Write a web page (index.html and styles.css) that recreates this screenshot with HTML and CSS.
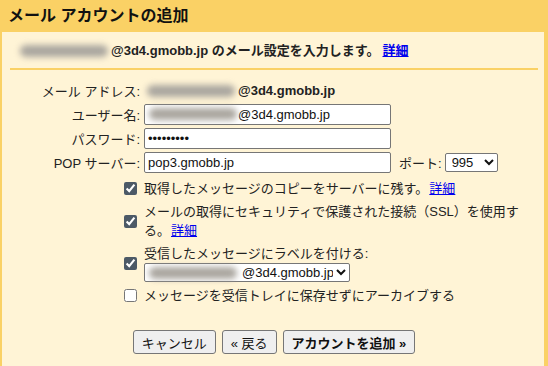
FILE: index.html
```html
<!DOCTYPE html>
<html lang="ja">
<head>
    <meta charset="UTF-8">
    <meta name="viewport" content="width=device-width, initial-scale=1.0">
    <title>メール アカウントの追加</title>
    <link rel="stylesheet" href="styles.css">
</head>
<body>
    <div class="title">メール アカウントの追加</div>
    <div class="panel">
        <div class="intro">
            <span class="blur"></span><b>@3d4.gmobb.jp のメール設定を入力します。</b><a href="#">詳細</a>
        </div>

        <form class="settings">
            <label>メール アドレス:</label>
            <div class="value"><span class="blur"></span><b>@3d4.gmobb.jp</b></div>

            <label for="user">ユーザー名:</label>
            <div class="field">
                <input type="text" id="user" class="masked" value="@3d4.gmobb.jp">
                <span class="blur over"></span>
            </div>

            <label for="pass">パスワード:</label>
            <div><input type="password" id="pass" value="123456789"></div>

            <label for="server">POP サーバー:</label>
            <div class="server">
                <input type="text" id="server" value="pop3.gmobb.jp">
                <span class="port">ポート:</span>
                <select class="port-select">
                    <option>995</option>
                    <option>110</option>
                </select>
            </div>
        </form>

        <div class="options">
            <div class="option">
                <input type="checkbox" checked>
                <span>取得したメッセージのコピーをサーバーに残す。<a href="#">詳細</a></span>
            </div>
            <div class="option">
                <input type="checkbox" checked>
                <span class="wrap">メールの取得にセキュリティで保護された接続（SSL）を使用する。<a href="#">詳細</a></span>
            </div>
            <div class="option">
                <input type="checkbox" checked>
                <div>
                    <div>受信したメッセージにラベルを付ける:</div>
                    <div class="field">
                        <select class="label-select">
                            <option>@3d4.gmobb.jp</option>
                        </select>
                        <span class="blur over"></span>
                    </div>
                </div>
            </div>
            <div class="option">
                <input type="checkbox">
                <span>メッセージを受信トレイに保存せずにアーカイブする</span>
            </div>
        </div>

        <div class="buttons">
            <button>キャンセル</button>
            <button>« 戻る</button>
            <button class="primary">アカウントを追加 »</button>
        </div>
    </div>
</body>
</html>
```

FILE: styles.css
```css
body {
    margin: 0;
    background: #fad165;
    color: #222;
    font-family: "Liberation Sans", "Noto Sans CJK JP", sans-serif;
    font-size: 13px;
}
.title {
    height: 32px;
    line-height: 31px;
    padding-left: 8px;
    font-size: 16px;
    font-weight: bold;
    color: #111;
}
.panel {
    background: #fff4d6;
    margin: 0 4px 0 2px;
    padding: 0 6px 0 8px;
    min-height: calc(100vh - 32px);
    box-sizing: border-box;
}
a {
    color: #0000ee;
}
.intro {
    padding: 10px 0 8px 8px;
    line-height: 18px;
    border-bottom: 2px solid #fad165;
}
.intro a {
    margin-left: 3px;
    font-weight: bold;
}
.options a {
    margin-left: 1px;
}
.blur {
    display: inline-block;
    width: 88px;
    height: 12px;
    margin: 0 3px 0 2px;
    background: #aaa69f;
    border-radius: 6px;
    filter: blur(3px);
    vertical-align: -2px;
}
.settings {
    display: grid;
    grid-template-columns: 130px 1fr;
    grid-auto-rows: 21px;
    column-gap: 4px;
    row-gap: 3px;
    align-items: center;
    margin-top: 10px;
}
.settings label {
    text-align: right;
}
.value .blur {
    margin-left: 3px;
}
input[type="text"], input[type="password"] {
    width: 247px;
    height: 21px;
    box-sizing: border-box;
    border: 1px solid #767676;
    border-radius: 2px;
    padding: 1px 3px;
    font-family: inherit;
    font-size: 13px;
    color: #111;
    background: white;
}
input.masked {
    padding-left: 93px;
}
.field {
    position: relative;
    display: inline-block;
}
.blur.over {
    position: absolute;
    left: 5px;
    top: 4px;
    margin: 0;
}
.server {
    display: flex;
    align-items: center;
}
.port {
    margin: 0 3px 0 8px;
}
select {
    font-family: inherit;
    font-size: 13px;
    color: #111;
    border: 1px solid #767676;
    border-radius: 2px;
    background: white;
}
.port-select {
    width: 53px;
    height: 19px;
    padding: 0 0 0 2px;
}
.options {
    display: flex;
    flex-direction: column;
    gap: 4px;
    margin-top: 6px;
    padding-left: 114px;
    line-height: 19px;
}
.option {
    display: flex;
    align-items: center;
    gap: 7px;
}
.option input {
    width: 13px;
    height: 13px;
    margin: 0;
    flex: none;
    accent-color: #4c5966;
}
.wrap {
    width: 385px;
}
.label-select {
    width: 206px;
    height: 19px;
    padding: 0 0 0 93px;
}
.buttons {
    display: flex;
    justify-content: center;
    gap: 6px;
    margin-top: 25px;
}
button {
    height: 24px;
    padding: 0 8px;
    background: #efefef;
    border: 1px solid #767676;
    border-radius: 3px;
    font-family: inherit;
    font-size: 13px;
    color: #111;
}
button.primary {
    font-weight: bold;
}
```
